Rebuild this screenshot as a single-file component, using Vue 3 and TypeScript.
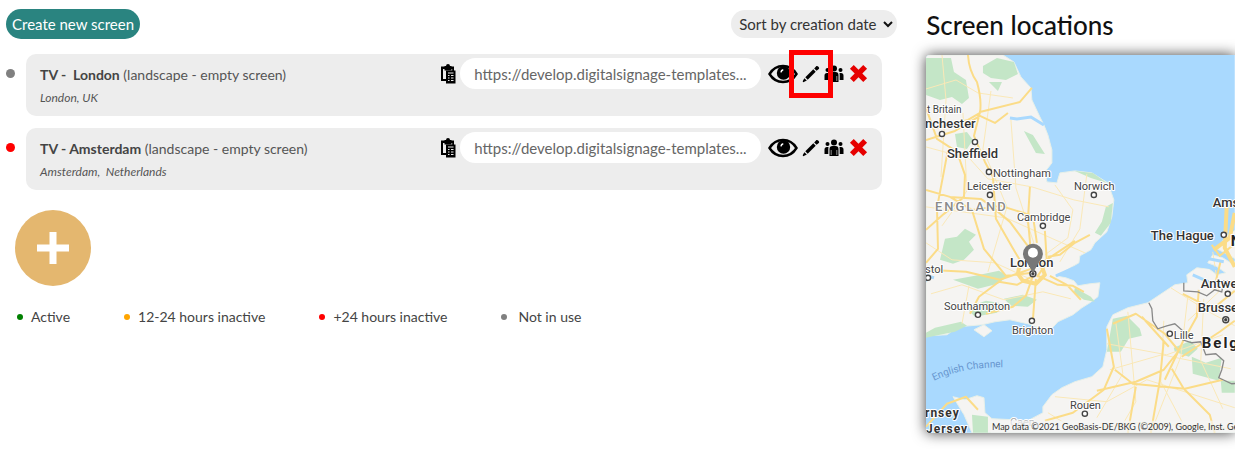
<script setup lang="ts">
import { ref } from 'vue'

type Status = 'active' | 'recent' | 'stale' | 'unused'

interface Screen {
  id: number
  name: string
  info: string
  place: string
  status: Status
  url: string
  highlighted: boolean
}

interface MapLabel {
  text: string
  x: number
  y: number
  kind: string
}

const sortOrder = ref('created')

const screens: Screen[] = [
  {
    id: 1,
    name: 'TV -\u00a0 London',
    info: '(landscape - empty screen)',
    place: 'London, UK',
    status: 'unused',
    url: 'https://develop.digitalsignage-templates...',
    highlighted: true,
  },
  {
    id: 2,
    name: 'TV - Amsterdam',
    info: '(landscape - empty screen)',
    place: 'Amsterdam,\u00a0 Netherlands',
    status: 'stale',
    url: 'https://develop.digitalsignage-templates...',
    highlighted: false,
  },
]

const legend: { status: Status; label: string }[] = [
  { status: 'active', label: 'Active' },
  { status: 'recent', label: '12-24 hours inactive' },
  { status: 'stale', label: '+24 hours inactive' },
  { status: 'unused', label: 'Not in use' },
]

const labels: MapLabel[] = [
  { text: 't Britain', x: 927, y: 113, kind: 'small' },
  { text: 'nchester', x: 925, y: 128, kind: 'city' },
  { text: 'Sheffield', x: 947, y: 158, kind: 'city' },
  { text: 'Nottingham', x: 993, y: 177, kind: 'town' },
  { text: 'Leicester', x: 967, y: 190, kind: 'town' },
  { text: 'Norwich', x: 1074, y: 190, kind: 'town' },
  { text: 'ENGLAND', x: 935, y: 211, kind: 'country' },
  { text: 'Cambridge', x: 1017, y: 221, kind: 'town' },
  { text: 'London', x: 1010, y: 267, kind: 'city' },
  { text: 'stol', x: 925, y: 273, kind: 'town' },
  { text: 'Southampton', x: 944, y: 310, kind: 'town' },
  { text: 'Brighton', x: 1012, y: 334, kind: 'town' },
  { text: 'Ams', x: 1213, y: 207, kind: 'city' },
  { text: 'The Hague', x: 1151, y: 240, kind: 'city' },
  { text: 'N', x: 1231, y: 246, kind: 'nation' },
  { text: 'Antwe', x: 1201, y: 288, kind: 'city' },
  { text: 'Brusse', x: 1198, y: 312, kind: 'city' },
  { text: 'Lille', x: 1174, y: 339, kind: 'town' },
  { text: 'Belg', x: 1202, y: 348, kind: 'nation' },
  { text: 'Rouen', x: 1070, y: 409, kind: 'town' },
  { text: 'Caen', x: 1010, y: 426, kind: 'faded' },
  { text: 'rnsey', x: 925, y: 417, kind: 'island' },
  { text: 'Jersey', x: 926, y: 433, kind: 'island' },
]

const towns: [number, number][] = [
  [942, 134], [975, 142], [989, 172], [990, 195], [1094, 195], [1043, 226],
  [928, 278], [978, 315], [1032, 321], [1224, 235], [1228, 294], [1170, 334], [1085, 414],
]

const capitals: [number, number][] = [[1033, 274], [1226, 320]]
</script>

<template>
  <div class="page">
    <main class="screens">
      <header class="toolbar">
        <button type="button" class="create">Create new screen</button>
        <span class="sort">
          <select v-model="sortOrder" aria-label="Sort screens">
            <option value="created">Sort by creation date</option>
            <option value="name">Sort by name</option>
          </select>
          <svg class="chevron" viewBox="0 0 10 7" aria-hidden="true"><path d="M1 1l4 4 4-4" /></svg>
        </span>
      </header>

      <ul class="list">
        <li v-for="screen in screens" :key="screen.id" class="row">
          <span class="dot large" :class="screen.status"></span>
          <article class="card">
            <div class="details">
              <div class="title"><strong>{{ screen.name }}</strong> {{ screen.info }}</div>
              <div class="place">{{ screen.place }}</div>
            </div>
            <div class="actions">
              <button type="button" class="icon copy" aria-label="Copy link">
                <svg viewBox="0 0 16 20">
                  <path d="M1 2.500h3.500V2H6a2 2 0 0 1 4 0h1.500v.5H14V7H6v10H1z" />
                  <path class="board" d="M3 5h1.500v1.500h7V5h.7v2H6v8H3z" />
                  <path d="M6 6.500h9.500V19.500H6z" />
                  <path class="lines" d="M8 9h5.500M8 11.500h1.500M11 11.500h2.500M8 14h1.500M11 14h2.500M8 16.500h1.500M11 16.500h2.500" />
                </svg>
              </button>
              <input class="link" type="text" readonly :value="screen.url" aria-label="Screen link" />
              <button type="button" class="icon view" aria-label="Preview">
                <svg viewBox="0 0 30 20">
                  <path class="eye" d="M1.500 10C5 4.300 9.500 2 15 2s10 2.300 13.500 8C25 15.700 20.500 18 15 18S5 15.700 1.500 10z" />
                  <circle cx="15.500" cy="9" r="6.700" />
                  <path class="glint" d="M12.200 8.300q.3-2.700 2.900-3.300l.3 1.500q-1.500.5-1.700 2z" />
                </svg>
              </button>
              <button type="button" class="icon edit" :class="{ highlighted: screen.highlighted }" aria-label="Edit">
                <svg viewBox="0 0 18 18">
                  <path d="M11.300 4.300l2.400 2.400L5.700 14.700l-2.400-2.400z" />
                  <path d="M2.400 13.200l2.400 2.400-3 1.500q-1.300.3-1-1z" />
                  <path d="M12.200 3.400l2-2.200c1.200-1.200 4 1.500 2.600 2.700l-2.200 1.900z" />
                </svg>
              </button>
              <button type="button" class="icon users" aria-label="Users">
                <svg viewBox="0 0 20 18">
                  <circle cx="10" cy="3.500" r="3" /><circle cx="3.500" cy="5" r="2" /><circle cx="16.500" cy="5" r="2" />
                  <path d="M5.500 17v-7q0-3 3-3h3q3 0 3 3v7zM.5 15v-4.500q0-2.500 2.500-2.500h1.500q-.2 1-.2 2.500V15zM19.500 15v-4.500q0-2.500-2.500-2.500h-1.500q.2 1 .2 2.500V15z" />
                  <path class="arms" d="M7.200 11v5M12.800 11v5" />
                </svg>
              </button>
              <button type="button" class="icon remove" aria-label="Delete">
                <svg viewBox="0 0 20 20">
                  <path d="M5 1l5 5 5-5 4 4-5 5 5 5-4 4-5-5-5 5-4-4 5-5-5-5z" />
                </svg>
              </button>
            </div>
          </article>
        </li>
      </ul>

      <button type="button" class="add" aria-label="Add screen">
        <svg viewBox="0 0 32 32"><path d="M12.500 0h7v12.500H32v7H19.500V32h-7V19.500H0v-7h12.500z" /></svg>
      </button>

      <ul class="legend">
        <li v-for="entry in legend" :key="entry.status" :class="'for-' + entry.status">
          <span class="dot" :class="entry.status"></span>{{ entry.label }}
        </li>
      </ul>
    </main>

    <aside class="locations">
      <h2>Screen locations</h2>
      <div class="map">
        <svg viewBox="926 55 309 378" role="img" aria-label="Map of screen locations">
          <rect class="sea" x="926" y="55" width="309" height="378" />
          <g class="land">
            <path d="M926 55H1003L1014 62 1021 77 1031 88 1032 100 1040 117 1044 125 1048 135 1052 150 1052 163 1045 172 1047 182 1057 183 1060 173 1075 171 1092 173 1108 183 1114 200 1112 217 1107 232 1095 243 1091 250 1080 256 1079 263 1072 267 1062 273 1055 276 1066 278 1074 281 1078 286 1090 284 1100 283 1098 297 1090 303 1082 308 1073 315 1058 322 1048 333 1032 325 1010 320 995 322 982 325 958 327 947 335 926 336V283L931 277 926 276z" />
            <path d="M974 330l10-5 8 6-8 6zM953 397l12 3 12-4 7 2 1 15 7 6 20 1 16 1 15-8V407l9-12 10-7 13-6 17-5 11-10 4-17V327l6-12 15-7 20-5 27-18 13-2-1-8 10-7 12 1 8 6 9-2-10-7-8-3 5-8 10 3 8 5 8-2-14-8-8-4 9-12 10-7 8-11 5-9V433H972l-8-18z" />
          </g>
          <g class="green">
            <path d="M926 58h25l3 14 12 8 3 18-7 6-10-7-12 3-14-5zM983 66l14-8 17 4 4 12-12 6-15-2-8-5zM989 82h13l-4 9zM955 134l12-2 6 8-6 9-10-2zM1024 131l9 4 12 19-9-1zM945 239l12-2 8-8 11 6-7 7 5 8-10 10-11 4-13-4zM953 280l22-4 24-5 9 5-10 8-20 5zM966 308l20-7 18 3-7 9-22 4zM926 333l9-5 26-6 6 4-12 6-15 3-14 3zM1004 299l19-4 14 5-9 7-17-1zM1075 171l18 2 14 10-16-5zM1106 207l7-4-2 20-10 13-6-3 7-11zM1075 288l16 9 4 5-11-2-10-7zM1113 319l14-3 13 13 2 7-13 3-8 13h-14zM1174 348l17-7 7 8-9 8-14-5zM1192 357l14 6 16-5-3 23-26-7zM1221 381h14v12h-13zM972 415l16 2v16h-15z" />
          </g>
          <g class="minor">
            <path d="M926 89l30-9 22 13 35 5M942 55l4 45-5 77M926 147l44 12 18 20 44 8 42 13 35 7M963 113l4 78-25 35M991 91l-8 58 24 58-19 65M1011 120l5 68 24 74M926 207l80 11 47 21 32 14M1055 185l18 25-5 28-23 17M1087 174l-7 55-20 33M926 243l26 17 43 3 37 17M931 294l31-9 42 15 39-8 28 7M969 286l-7 38M1116 323l7 51-26 44M1128 312l8 90-18 31M1107 344l60 11 56-20M1110 370l52-15 69 14M1164 321l-3 61 27 51M1188 297l-7 60-30 76M1204 299l-3 62 22 48M1171 288l38 24 26 14M1055 397l52 5 40-22 88 28M1048 413l29 18 60-8 98 6M1213 252l6 40-31 29" />
          </g>
          <g class="road">
            <path d="M968 55q1 16 9 27 5 18 3 31l-12 7-31 8M980 112l-6 24 11 26 8 15 3 42 16 28 12 20M926 108l11 31 20 13 8 23-1 22-20 17-18 16M926 140l29-9 25-15 15 7 13-10M980 112l40-10 12-14M948 150l-11 58 1 41-12 14M926 190l24 7 31 2 10 7 19 16 23 31M950 197l22 13 12 39 22 27 26-3M972 210l29-4 32 10 4 27M1030 187l-2 33 4 43M1045 231l2 32-10 14M926 270l40 2 34 8 31-11 17-10 27-18M1033 276l-7 20-13 11-27 7M1035 275l-18 10-18-3-20 15-9 17M1038 276l20 9 15 1 11 6M1048 257l12-2 15-12 15-8M1036 279l-3 41M1050 276l17 9 14 15M1107 329l7 38-10 23-31 23-28 8M1113 324l23-10 29 20 14 17-15 19-28 12-39 9M1136 387l-8 46M1115 370l18 14 52 5 38-9M1164 341l-4 40-9 52M1165 380l18-38 14-25 2-27M1172 369l12 20 26 26 5 18M1182 357l38-25 15-11M1169 347l-27-30M1183 294l30 15 22-18M1212 245l8 11 15-12M1221 261l-7 29M926 427l21-23 19-7 12 13" />
            <path class="wide" d="M1019 268l8-7 14 3 4 11-9 9-13-3-5-7zM1214 250l16-12 5-25M1227 205l-2 43 10 19" />
          </g>
          <path class="water" d="M1044 125l-13-8-14 2-7-1M926 276l8 2M1056 276l18-8M1200 266l17 3M1204 258l20 4M1193 275l18 8" />
          <path class="border" d="M1149 303l3 6 1 12 5 8 9-3 8-2 9 8-1 8 9 3 9-1 5 13 10-1 8 7-2 9-3 8 13 6 13-1M1184 283v8l14 1 9 4 8-6 7 2 2-11 11 1" />
          <g class="dots">
            <circle v-for="([x, y], i) in towns" :key="i" :cx="x" :cy="y" r="2.600" />
          </g>
          <text v-for="label in labels" :key="label.text" :x="label.x" :y="label.y" :class="label.kind">{{ label.text }}</text>
          <path id="channel-curve" class="guide" d="M934 381Q967 365 1016 368" />
          <text class="channel"><textPath href="#channel-curve">English Channel</textPath></text>
          <g v-for="([x, y], i) in capitals" :key="i" class="capital">
            <circle :cx="x" :cy="y" r="3" /><circle class="core" :cx="x" :cy="y" r="1" />
          </g>
          <path class="pin" d="M1033 273L1026 261Q1023 258 1023 254a10 10 0 0 1 20 0q0 4-3 7z" />
          <circle class="pin-hole" cx="1033" cy="253" r="5" />
          <rect class="credit-bar" x="991" y="421" width="244" height="12" />
          <text class="credit" x="992" y="430">Map data ©2021 GeoBasis-DE/BKG (©2009), Google, Inst. Ge</text>
        </svg>
      </div>
    </aside>
  </div>
</template>

<style>
body {
  margin: 0;
  background: #fff;
}
</style>

<style scoped>
.page {
  display: grid;
  grid-template-columns: minmax(0, 3fr) minmax(0, 1fr);
  padding-bottom: 30px;
  font-family: Lato, "Open Sans", sans-serif;
  font-size: 15px;
  line-height: 20px;
  color: #444;
}
button, input, select {
  font: inherit;
  color: inherit;
  border: 0;
  margin: 0;
}
button {
  padding: 0;
  background: none;
  cursor: pointer;
}
ul {
  list-style: none;
  margin: 0;
  padding: 0;
}
.screens {
  padding: 9px 44px 0 6px;
}
.toolbar {
  display: flex;
  justify-content: space-between;
  align-items: center;
  margin-right: -15px;
}
.create {
  height: 30px;
  padding: 0 6px;
  border-radius: 15px;
  background: #2a8480;
  color: #fff;
}
.sort {
  display: grid;
  align-items: center;
}
.sort select {
  grid-area: 1 / 1;
  appearance: none;
  height: 28px;
  padding: 0 20px 0 8px;
  border-radius: 14px;
  background: #ededed;
  color: #333;
}
.chevron {
  grid-area: 1 / 1;
  justify-self: end;
  width: 10px;
  height: 7px;
  margin-right: 4px;
  fill: none;
  stroke: #111;
  stroke-width: 2;
  pointer-events: none;
}
.list {
  display: grid;
  gap: 12px;
  margin-top: 15px;
}
.row {
  display: flex;
  gap: 11px;
}
.dot {
  flex: none;
  width: 6px;
  height: 6px;
  border-radius: 50%;
}
.dot.large {
  width: 9px;
  height: 9px;
  margin-top: 15px;
}
.active { background: green; }
.recent { background: orange; }
.stale { background: red; }
.unused { background: gray; }
.card {
  flex: 1;
  min-width: 0;
  display: flex;
  justify-content: space-between;
  align-items: flex-start;
  padding: 4px 14px;
  border-radius: 10px;
  background: #ededed;
}
.details {
  padding-top: 7px;
  font-size: 14px;
  color: #555;
}
.title strong {
  color: #444;
}
.place {
  margin-top: 3px;
  padding-bottom: 4px;
  font-size: 12px;
  font-style: italic;
}
.actions {
  display: flex;
  align-items: center;
}
.icon {
  flex: none;
  display: block;
}
.icon svg {
  display: block;
  width: 100%;
}
.copy { width: 16px; }
.copy .board { fill: #ededed; }
.copy .lines { stroke: #ededed; stroke-width: 1.2; }
.link {
  box-sizing: border-box;
  width: 301px;
  height: 31px;
  margin: 0 7px 0 4px;
  padding: 0 14px;
  border-radius: 16px;
  background: #fff;
  color: #666;
}
.view { width: 30px; }
.eye { fill: none; stroke: #000; stroke-width: 2.4; }
.glint { fill: #fff; }
.edit {
  width: 18px;
  margin: 0 4px;
}
.edit.highlighted {
  position: relative;
}
.edit.highlighted::after {
  content: "";
  position: absolute;
  inset: -15px -13px;
  border: 5px solid #fe0000;
}
.users { width: 20px; }
.arms { stroke: #ededed; stroke-width: 0.6; }
.remove {
  width: 19px;
  margin-left: 5px;
  fill: #e60000;
}
.add {
  display: grid;
  place-items: center;
  width: 76px;
  height: 76px;
  margin: 20px 0 0 9px;
  border-radius: 50%;
  background: #e4b76f;
}
.add svg {
  width: 32px;
  height: 32px;
  fill: #fff;
}
.legend {
  display: flex;
  gap: 54px;
  margin: 21px 0 0 11px;
  font-size: 14px;
}
.legend li {
  display: flex;
  align-items: center;
  gap: 8px;
}
.legend .for-unused { gap: 11px; }
h2 {
  margin: 0;
  padding: 8px 0 13px;
  font-size: 26px;
  line-height: 34px;
  font-weight: 500;
  color: #111;
}
.map {
  border-radius: 4px 0 0 4px;
  box-shadow: 0 0 14px rgba(0, 0, 0, 0.75);
}
.map svg {
  display: block;
  width: 100%;
  border-radius: 4px 0 0 4px;
  font-family: Roboto, sans-serif;
}
.sea { fill: #a9d9fe; }
.land { fill: #f5f4f2; stroke: #e8f0e8; stroke-width: 1; }
.green { fill: #c4e6c7; }
.minor { fill: none; stroke: #fae8b7; stroke-width: 1; }
.road { fill: none; stroke: #fbdc88; stroke-width: 2; stroke-linejoin: round; }
.road .wide { stroke-width: 4; }
.water { fill: none; stroke: #a9d9fe; stroke-width: 3; }
.border { fill: none; stroke: #888; stroke-width: 1.3; }
.dots circle, .capital circle { fill: #fff; stroke: #444; stroke-width: 1.4; }
.capital .core { fill: #222; }
.map text {
  fill: #444;
  stroke: #fff;
  stroke-width: 2;
  stroke-linejoin: round;
  paint-order: stroke;
  font-size: 11px;
}
.map .small { font-size: 10px; }
.map .city { font-size: 13px; font-weight: 500; fill: #333; }
.map .country { font-size: 13px; font-weight: 500; fill: #8a8a8a; letter-spacing: 2px; }
.map .nation { font-size: 15px; font-weight: 700; fill: #222; letter-spacing: 2px; }
.map .island { font-size: 12px; font-weight: 700; fill: #333; letter-spacing: 1px; }
.map .faded { fill: #aaa; }
.map .channel { fill: #6796ce; stroke: none; font-size: 10px; }
.guide { fill: none; }
.pin { fill: #777; }
.pin-hole { fill: #fff; }
.credit-bar { fill: #f5f5f5; opacity: 0.7; }
.map .credit { font-family: Lato, sans-serif; font-size: 9px; stroke: none; fill: #333; }
</style>
